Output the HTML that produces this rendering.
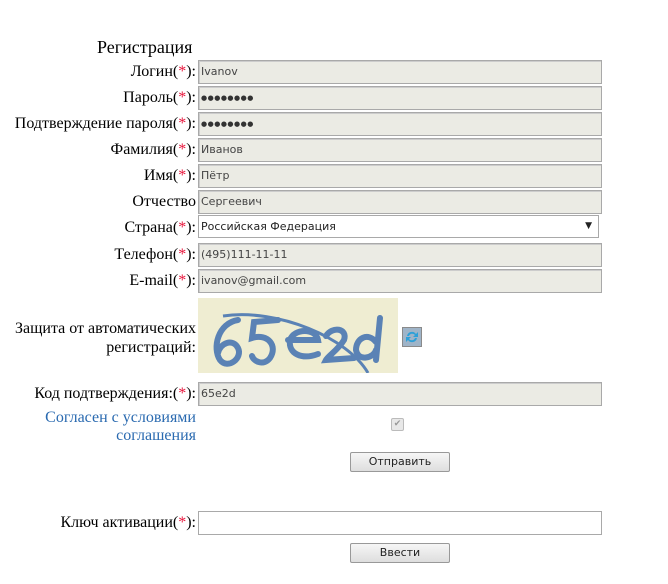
<!DOCTYPE html>
<html><head><meta charset="utf-8"><style>
body{margin:0;width:668px;height:584px;background:#fff;position:relative;overflow:hidden;font-family:"Liberation Serif","DejaVu Serif",serif;font-size:16px;color:#000}
.l{position:absolute;right:472px;text-align:right;white-space:nowrap;line-height:18px}
.s{color:#e8163c}
.i{position:absolute;left:198px;width:400px;height:22px;border:1px solid #a9a9a9;background:#ebebe4;box-shadow:inset 1px 1px 0 #ccc;font-family:"DejaVu Sans",Verdana,sans-serif;font-size:11px;color:#444;line-height:22px;padding-left:2px;box-sizing:content-box}
.d{font-size:7px;letter-spacing:0.5px;color:#333}
.b{position:absolute;left:350px;width:98px;height:18px;border:1px solid #999;border-radius:2px;background:linear-gradient(#f6f6f6,#dedede);font-family:"DejaVu Sans",Verdana,sans-serif;font-size:11px;text-align:center;line-height:18px;color:#222}
</style></head><body>
<div style="position:absolute;left:97px;top:37px;font-size:18px">Регистрация</div>
<div class="l" style="top:63px">Логин(<span class="s">*</span>):</div><div class="i" style="top:60px">Ivanov</div>
<div class="l" style="top:89px">Пароль(<span class="s">*</span>):</div><div class="i d" style="top:86px">●●●●●●●●</div>
<div class="l" style="top:115px">Подтверждение пароля(<span class="s">*</span>):</div><div class="i d" style="top:112px">●●●●●●●●</div>
<div class="l" style="top:141px">Фамилия(<span class="s">*</span>):</div><div class="i" style="top:138px">Иванов</div>
<div class="l" style="top:167px">Имя(<span class="s">*</span>):</div><div class="i" style="top:164px">Пётр</div>
<div class="l" style="top:193px">Отчество</div><div class="i" style="top:190px">Сергеевич</div>
<div class="l" style="top:219px">Страна(<span class="s">*</span>):</div>
<div class="i" style="top:215px;width:397px;height:21px;line-height:21px;background:#fff;box-shadow:none;color:#222">Российская Федерация<span style="position:absolute;right:6px;font-size:9px">▼</span></div>
<div class="l" style="top:246px">Телефон(<span class="s">*</span>):</div><div class="i" style="top:243px">(495)111-11-11</div>
<div class="l" style="top:272px">E-mail(<span class="s">*</span>):</div><div class="i" style="top:269px">ivanov@gmail.com</div>
<div class="l" style="top:319px;line-height:19px">Защита от автоматических<br>регистраций:</div>
<svg style="position:absolute;left:198px;top:298px" width="200" height="75"><rect width="200" height="75" fill="#efedd2"/>
<g fill="none" stroke="#5a82b5" stroke-width="6" stroke-linecap="round">
<path d="M40 22 C20 25 14 50 22 62 C30 72 45 60 40 50 C35 40 22 45 20 55"/>
<path d="M80 22 L56 24 L54 40 C70 35 80 48 72 60 C66 68 56 64 54 58"/>
<path d="M90 42 L120 42 C118 30 96 30 92 42 C90 56 104 62 120 56"/>
<path d="M128 38 C134 28 150 30 146 42 C140 52 130 58 128 62 L156 60"/>
<path d="M182 20 L178 62 M178 44 C170 34 158 40 158 52 C160 64 176 60 178 52"/>
</g><path d="M25 18 C80 10 150 40 170 75" stroke="#5a82b5" stroke-width="3" fill="none"/></svg>
<svg style="position:absolute;left:402px;top:327px" width="20" height="20"><rect x=".5" y=".5" width="19" height="19" fill="#9fb4c8" stroke="#8a8a8a"/><path d="M5 9 A5 5 0 0 1 14 7 L16 5 L16 10 L11 10 L13 8 A3.5 3.5 0 0 0 7 9Z M15 11 A5 5 0 0 1 6 13 L4 15 L4 10 L9 10 L7 12 A3.5 3.5 0 0 0 13 11Z" fill="#2ea0d8"/></svg>
<div class="l" style="top:385px">Код подтверждения:(<span class="s">*</span>):</div><div class="i" style="top:382px">65e2d</div>
<div class="l" style="top:409px;color:#2a6ab0;line-height:18px">Согласен с условиями<br>соглашения</div>
<div style="position:absolute;left:391px;top:418px;width:11px;height:11px;border:1px solid #bbb;border-radius:2px;background:#e8e8e8;font-size:9px;color:#999;text-align:center;line-height:11px;font-family:'DejaVu Sans',sans-serif">✔</div>
<div class="b" style="top:452px">Отправить</div>
<div class="l" style="top:514px">Ключ активации(<span class="s">*</span>):</div>
<div class="i" style="top:511px;background:#fff;box-shadow:none"></div>
<div class="b" style="top:543px">Ввести</div>
</body></html>
